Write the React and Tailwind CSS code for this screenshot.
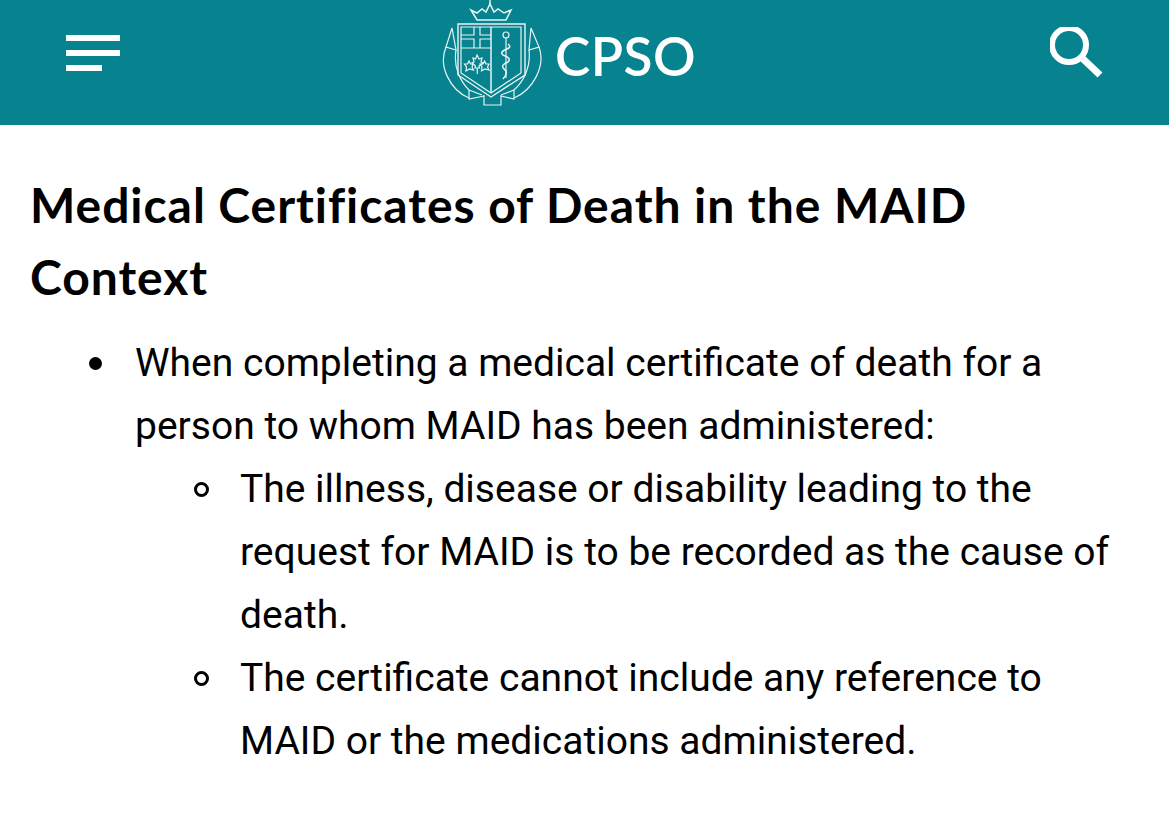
import React from 'react';

const Crest = () => (
  <svg width="102" height="106" viewBox="0 0 102 106" fill="none" stroke="#e6f4f5" strokeWidth="1.200" className="shrink-0">
    {/* crown */}
    <path d="M30 10 L36 20 H65 L70 10 L63 13 L57 9 L53 12 L49 4 L45 12 L41 9 L36 13 Z" strokeWidth="1.500" />
    <path d="M49 4 V0" strokeWidth="1.500" />
    {/* shield */}
    <path d="M17 24 H84 V75 L50 97 L17 75 Z" strokeWidth="1.400" />
    <path d="M20 27 H80 V73 L50 93 L20 73 Z" />
    <path d="M50 27 V93" strokeWidth="1.500" />
    {/* top left quarters */}
    <path d="M20 35 H33 V27 M39 27 V35 H50 M20 39 H33 V48 M39 48 V39 H50 M20 48 H50" />
    {/* maple leaves */}
    <path d="M36 55 L38 59 L41 58 L40 62 L42 63 L38 66 L38.500 68 H34 L34.500 66 L31 63 L33 62 L32 58 L34.500 59 Z" />
    <path d="M36.300 68 V74" />
    <path d="M28 61 L29.500 64 L32 64 L31 67 L32.500 70 L28.500 69 L25 71 L25.500 67 L23.500 64 L26.500 64 Z" />
    <path d="M43.500 61 L45 64 L48 64 L46.500 67 L48 70 L44 69 L40.500 71 L41 67 L39 64 L42 64 Z" />
    {/* rod and serpent */}
    <circle cx="65" cy="35" r="3" />
    <path d="M65 38 V78" />
    <path d="M67 44 Q71 47 66 49 Q58 52 62 55 Q71 58 67 62 Q59 65 63 69 Q68 72 62 79" strokeWidth="1.500" />
    {/* ribbon */}
    <path d="M11 28 L5 47 L15 50 Z M90 28 L98 47 L88 50 Z" />
    <path d="M5 47 C-3 66 9 90 28 98 M98 47 C105 66 92 90 73 98 M15 50 C12 68 20 82 28 90 M88 50 C90 68 82 82 73 90" />
    <path d="M28 90 V99 L43 96 M73 90 V99 L60 96 M43 95 V105 H60 V95 M28 90 L41 95 M73 90 L60 95" />
  </svg>
);

const App = () => {
  return (
    <div className="w-[1169px] h-[833px] bg-white overflow-hidden text-black" style={{ fontFamily: 'Roboto, sans-serif' }}>
      <header className="h-[125px] bg-[#07838f] flex items-start justify-between pl-[66px] pr-[65px]">
        <div className="mt-[35px] flex flex-col gap-[9px] w-[54px]">
          <div className="h-[6px] w-[54px] bg-white" />
          <div className="h-[6px] w-[54px] bg-white" />
          <div className="h-[6px] w-[36px] bg-white" />
        </div>
        <div className="flex items-center mr-[33px]">
          <Crest />
          <span className="ml-[12px] mt-[4px] text-white text-[53px] leading-none font-semibold tracking-[0.5px] font-['Lato',sans-serif]">CPSO</span>
        </div>
        <svg width="54" height="54" viewBox="0 0 54 54" fill="none" stroke="white" className="mt-[27px]">
          <circle cx="19" cy="18" r="17" strokeWidth="6" />
          <path d="M31 30 L50 48" strokeWidth="7" />
        </svg>
      </header>
      <main className="pt-[44px] pl-[30px] pr-[40px]">
        <h1 className="text-[48px] leading-[72px] font-bold tracking-[0.95px] font-['Lato',sans-serif]">
          Medical Certificates of Death in the MAID Context
        </h1>
        <div className="mt-[19px] text-[39px] leading-[63px]">
          <div className="flex pl-[59px]">
            <div className="w-[46px] h-[63px] flex items-center shrink-0">
              <span className="w-[13px] h-[13px] rounded-full bg-black" />
            </div>
            <p>When completing a medical certificate of death for a person to whom MAID has been administered:</p>
          </div>
          <div className="flex pl-[164px]">
            <div className="w-[46px] h-[63px] flex items-center shrink-0">
              <span className="w-[15px] h-[15px] rounded-full border-[3px] border-black" />
            </div>
            <p>The illness, disease or disability leading to the request for MAID is to be recorded as the cause of death.</p>
          </div>
          <div className="flex pl-[164px]">
            <div className="w-[46px] h-[63px] flex items-center shrink-0">
              <span className="w-[15px] h-[15px] rounded-full border-[3px] border-black" />
            </div>
            <p>The certificate cannot include any reference to MAID or the medications administered.</p>
          </div>
        </div>
      </main>
    </div>
  );
};

export default App;
